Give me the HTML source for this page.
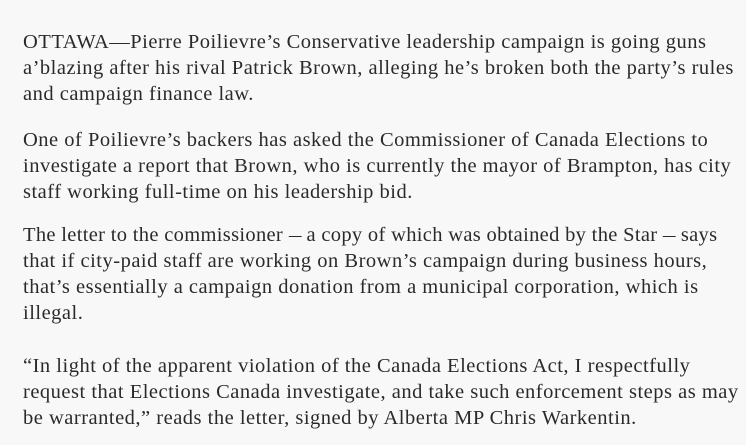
<!DOCTYPE html>
<html><head><meta charset="utf-8"><style>
html,body{margin:0;padding:0;background:#f8f8f8;width:746px;height:445px;overflow:hidden}
body{font-family:"Liberation Serif",serif;font-size:20.5px;color:#2a2a2a;letter-spacing:0.5px}
.p{position:absolute;left:23px}
.l{height:26px;line-height:26px;white-space:nowrap}
.d{display:inline-block;transform:scaleX(0.62);margin:0 -4px;letter-spacing:0}
</style></head><body>
<div class="p" style="top:29px">
<div class="l">OTTAWA—Pierre Poilievre’s Conservative leadership campaign is going guns</div>
<div class="l">a’blazing after his rival Patrick Brown, alleging he’s broken both the party’s rules</div>
<div class="l">and campaign finance law.</div>
</div>
<div class="p" style="top:127px">
<div class="l">One of Poilievre’s backers has asked the Commissioner of Canada Elections to</div>
<div class="l">investigate a report that Brown, who is currently the mayor of Brampton, has city</div>
<div class="l">staff working full-time on his leadership bid.</div>
</div>
<div class="p" style="top:222px">
<div class="l" style="letter-spacing:0.32px">The letter to the commissioner <span class="d">—</span> a copy of which was obtained by the Star <span class="d">—</span> says</div>
<div class="l">that if city-paid staff are working on Brown’s campaign during business hours,</div>
<div class="l">that’s essentially a campaign donation from a municipal corporation, which is</div>
<div class="l">illegal.</div>
</div>
<div class="p" style="top:353px">
<div class="l">“In light of the apparent violation of the Canada Elections Act, I respectfully</div>
<div class="l">request that Elections Canada investigate, and take such enforcement steps as may</div>
<div class="l">be warranted,” reads the letter, signed by Alberta MP Chris Warkentin.</div>
</div>
</body></html>
